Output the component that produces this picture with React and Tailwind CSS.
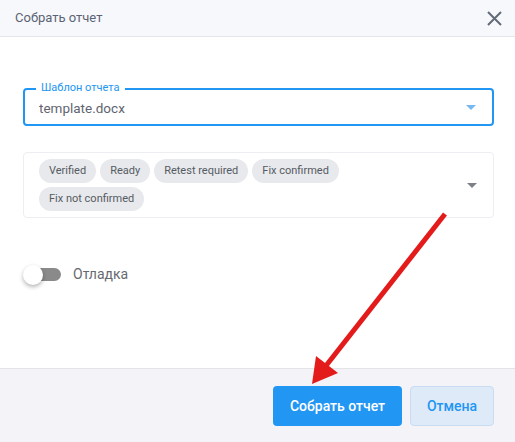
import React from 'react';

const chips = ['Verified', 'Ready', 'Retest required', 'Fix confirmed', 'Fix not confirmed'];

function Caret({ className }) {
  return (
    <svg width="10" height="5" viewBox="0 0 10 5" className={className}>
      <path d="M0 0 L10 0 L5 5 Z" fill="currentColor" />
    </svg>
  );
}

export default function App() {
  return (
    <div className="relative w-[515px] h-[442px] flex flex-col bg-white font-['Roboto',sans-serif] overflow-hidden">
      {/* header */}
      <div className="h-[37px] shrink-0 flex items-center justify-between pl-[15px] pr-[13px] bg-[#f7f8fb] border-b border-[#e3e5e9]">
        <span className="text-[13px] text-[#5a6474]">Собрать отчет</span>
        <svg width="15" height="15" viewBox="0 0 15 15" className="text-[#616b7a]">
          <path d="M1 1 L14 14 M14 1 L1 14" stroke="currentColor" strokeWidth="2" />
        </svg>
      </div>

      {/* body */}
      <div className="flex-1 pl-[23px] pr-[21px] pt-[51px]">
        <div className="relative h-[38px] border-2 border-[#2196f3] rounded-[4px] flex items-center justify-between pl-[14px] pr-[16px]">
          <span className="absolute -top-[9px] left-[11px] bg-white px-[5px] text-[11px] leading-[14px] text-[#2196f3]">
            Шаблон отчета
          </span>
          <span className="text-[13.5px] text-[#5f6470] pt-[3px]">template.docx</span>
          <Caret className="text-[#78b8f1]" />
        </div>

        <div className="mt-[26px] h-[66px] border border-[#eceef2] rounded-[4px] flex items-center justify-between pl-[15px] pr-[16px]">
          <div className="flex flex-wrap gap-[4px] w-[320px]">
            {chips.map((c) => (
              <span key={c} className="h-[24px] px-[10px] rounded-full bg-[#e8e9ec] text-[11px] text-[#555b63] flex items-center">
                {c}
              </span>
            ))}
          </div>
          <Caret className="text-[#7d8087]" />
        </div>

        <div className="mt-[46px] flex items-center">
          <div className="relative w-[38px] h-[20px] flex items-center">
            <div className="ml-[2px] w-[36px] h-[13px] rounded-full bg-[#8a8a8a]" />
            <div className="absolute left-0 top-0 w-[20px] h-[20px] rounded-full bg-white shadow-[0_2px_4px_rgba(0,0,0,0.3)]" />
          </div>
          <span className="ml-[12px] text-[14px] text-[#666a70]">Отладка</span>
        </div>
      </div>

      {/* footer */}
      <div className="h-[74px] shrink-0 bg-[#f3f3f8] border-t border-[#e3e4e8] flex items-start justify-end gap-[8px] pt-[17px] pr-[21px]">
        <button className="h-[40px] w-[129px] rounded-[4px] bg-[#2196f3] text-white text-[14px] font-medium">
          Собрать отчет
        </button>
        <button className="h-[40px] w-[84px] rounded-[4px] bg-[#dfeaf8] border border-[#c8dcf3] text-[#2196f3] text-[14px] font-medium">
          Отмена
        </button>
      </div>

      {/* annotation arrow */}
      <svg className="absolute inset-0 pointer-events-none" width="515" height="442" viewBox="0 0 515 442">
        <line x1="445" y1="214" x2="325" y2="367" stroke="#e31b1b" strokeWidth="5" />
        <path d="M312 384 L316 356 L338 373 Z" fill="#e31b1b" />
      </svg>
    </div>
  );
}
